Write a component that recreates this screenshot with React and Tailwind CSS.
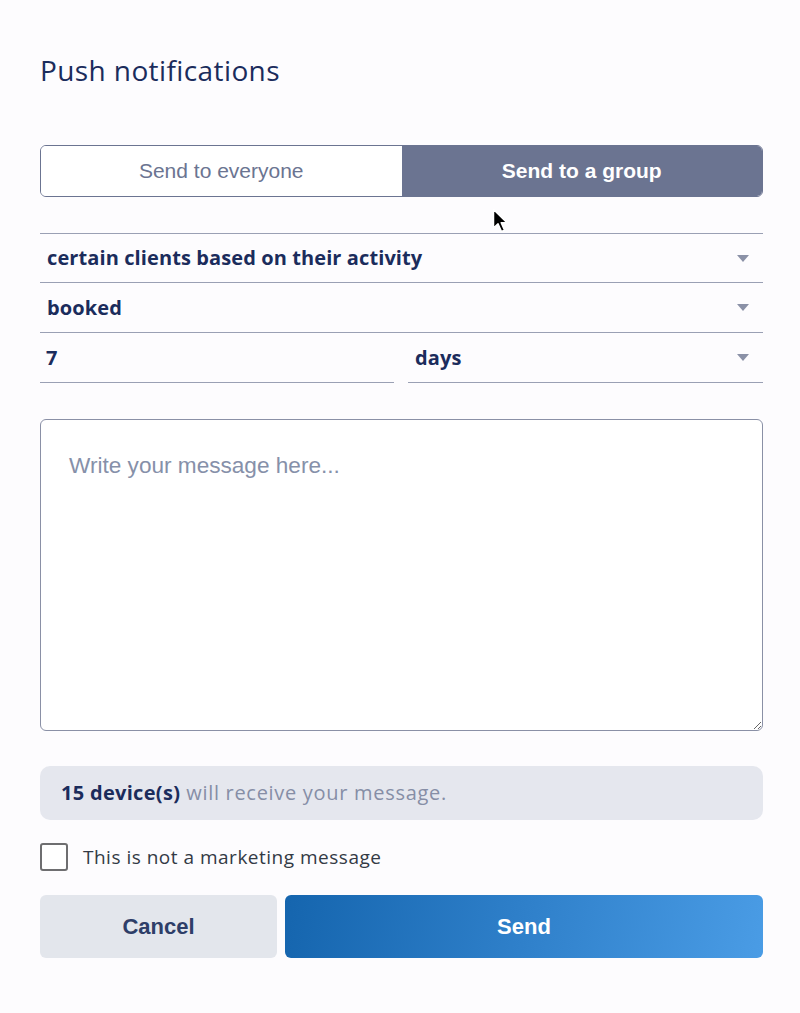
import React from "react";

const Arrow = () => (
  <svg width="12" height="7" viewBox="0 0 12 7" className="shrink-0">
    <path d="M0 0 L12 0 L6 7 Z" fill="#8b91a7" />
  </svg>
);

export default function App() {
  const proxima = { fontFamily: "'Open Sans', Lato, sans-serif" };
  const helv = { fontFamily: "'Liberation Sans', Arial, sans-serif" };
  return (
    <div className="relative w-[800px] h-[1013px] bg-[#fdfcfe] pl-[40px] pt-[52px]">
      <div className="w-[723px]">
        <h1 className="text-[28px] leading-[36px] tracking-[0.4px] text-[#1b2c5c]" style={proxima}>
          Push notifications
        </h1>

        <div className="mt-[57px] flex h-[52px] rounded-[6px] border border-[#6b7491] overflow-hidden" style={helv}>
          <div className="flex-1 flex items-center justify-center bg-white text-[21px] text-[#6b7491]">
            Send to everyone
          </div>
          <div className="flex-1 flex items-center justify-center bg-[#6b7491] text-[21px] font-bold text-white">
            Send to a group
          </div>
        </div>

        <div className="mt-[36px] border-t border-[#9aa0b4]" style={proxima}>
          <div className="flex items-center justify-between h-[49px] border-b border-[#9aa0b4] pl-[7px] pr-[14px]">
            <span className="text-[20px] font-bold tracking-[0.1px] text-[#1b2c5c]">certain clients based on their activity</span>
            <Arrow />
          </div>
          <div className="flex items-center justify-between h-[50px] border-b border-[#9aa0b4] pl-[7px] pr-[14px]">
            <span className="text-[20px] font-bold tracking-[0.1px] text-[#1b2c5c]">booked</span>
            <Arrow />
          </div>
          <div className="flex gap-[14px]">
            <div className="w-[354px] flex items-center h-[50px] border-b border-[#9aa0b4] pl-[6px]">
              <span className="text-[20px] font-bold text-[#1b2c5c]">7</span>
            </div>
            <div className="flex-1 flex items-center justify-between h-[50px] border-b border-[#9aa0b4] pl-[7px] pr-[14px]">
              <span className="text-[20px] font-bold tracking-[0.1px] text-[#1b2c5c]">days</span>
              <Arrow />
            </div>
          </div>
        </div>

        <textarea
          className="mt-[36px] block w-full h-[312px] rounded-[6px] border border-[#8a90a6] bg-white px-[28px] py-[29px] text-[22.6px] text-[#1b2c5c] placeholder:text-[#8690a9] outline-none"
          style={helv}
          placeholder="Write your message here..."
        />

        <div className="mt-[35px] h-[54px] rounded-[10px] bg-[#e5e7ee] flex items-center px-[21px] text-[20px]" style={proxima}>
          <span className="font-bold tracking-[0.3px] text-[#1b2c5c]">15 device(s)</span>
          <span className="ml-[6px] tracking-[0.7px] text-[#868ea6]">will receive your message.</span>
        </div>

        <div className="mt-[23px] flex items-center">
          <div className="w-[28px] h-[28px] rounded-[3px] border-2 border-[#6e6e70] bg-white" />
          <span className="ml-[15px] text-[19px] tracking-[0.5px] text-[#333a45]" style={proxima}>This is not a marketing message</span>
        </div>

        <div className="mt-[23px] flex gap-[8px] h-[63px]" style={helv}>
          <button className="w-[237px] rounded-[6px] bg-[#e3e6ec] text-[22px] font-bold text-[#2e3e68]">
            Cancel
          </button>
          <button className="flex-1 rounded-[6px] bg-[linear-gradient(100deg,#1565ae,#2f80ca_50%,#4a9ce5)] text-[22px] font-bold text-white">
            Send
          </button>
        </div>
      </div>

      <svg className="absolute left-[492px] top-[208px]" width="18" height="26" viewBox="0 0 18 26">
        <path d="M1.5 1.5 L1.5 20 L6 15.8 L9.5 23.5 L12.5 22.2 L9.2 14.8 L15 14.8 Z" fill="#000" stroke="#fff" strokeWidth="1.5" strokeLinejoin="round" />
      </svg>
    </div>
  );
}
